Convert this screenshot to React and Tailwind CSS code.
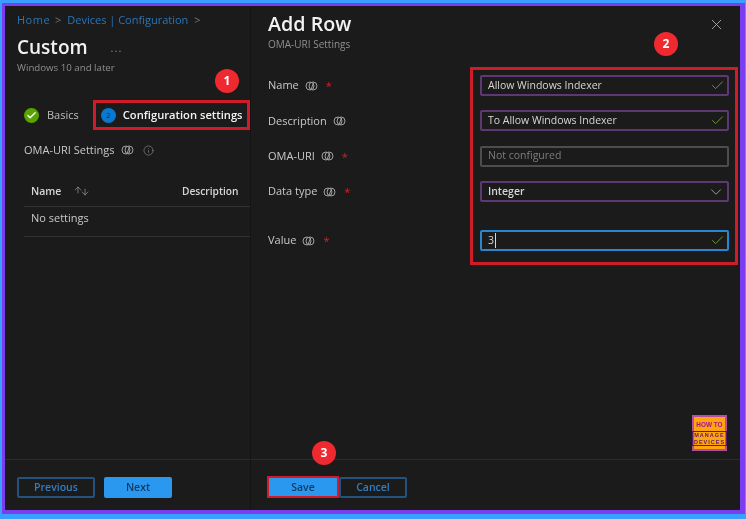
import { Check, ChevronDown, X, ArrowUp, ArrowDown, Info } from "lucide-react";

const HelpIcon = () => (
  <svg width="13" height="12" viewBox="0 0 13 12" fill="none" stroke="#a0a0a0" strokeWidth="1" className="shrink-0">
    <circle cx="5" cy="6" r="4" />
    <circle cx="8" cy="6" r="4" />
    <path d="M8.5 3 6 9.5" />
  </svg>
);

const Badge = ({ className, children }) => (
  <div className={`absolute flex h-[24px] w-[24px] items-center justify-center rounded-full bg-[#ee2a30] text-[12px] font-bold text-white ${className}`}>
    {children}
  </div>
);

const Label = ({ text, required }) => (
  <div className="flex items-center gap-[6px] text-[11px] text-[#c9c9c9]">
    <span>{text}</span>
    <HelpIcon />
    {required && <span className="ml-[2px] text-[11px] leading-none text-[#d8202a]">*</span>}
  </div>
);

const Field = ({ text, border = "border-[#5e3872]", color = "text-[#d6d6d6]", icon, cursor, bold }) => (
  <div className={`flex h-[21px] items-center justify-between rounded-[2px] border-2 pl-[6px] pr-[2px] text-[10.5px] ${border} ${color} ${bold ? "font-semibold" : ""}`}>
    <span className="flex items-center">
      {text}
      {cursor && <span className="ml-[1px] h-[15px] w-px bg-[#d6d6d6]" />}
    </span>
    {icon}
  </div>
);

const CheckMark = () => <Check size={15} strokeWidth={1.5} className="text-[#6f9a35]" />;

const App = () => {
  return (
    <main
      className="flex h-[519px] w-[746px] flex-col overflow-hidden bg-[#39a0ff] pb-[5px] pl-[2px] pr-[1px] pt-[3px] blur-[0.35px]"
      style={{ fontFamily: '"Open Sans", "Noto Sans", sans-serif' }}
    >
      <div className="relative flex min-h-0 flex-1 border-[3px] border-b-[4px] border-r-[5px] border-[#7a3df0] bg-[#1b1b1b]">
        {/* blade on the left */}
        <section className="flex w-[245px] shrink-0 flex-col">
          <div className="flex-1 pl-[12px]">
            <div className="mt-[5px] flex items-center gap-[6px] text-[11px] leading-[18px] text-[#2a75b8]">
              <span className="w-[32px] tracking-[0.5px]">Home</span>
              <span className="text-[#777]">&gt;</span>
              <span>Devices | Configuration</span>
              <span className="text-[#777]">&gt;</span>
            </div>
            <div className="mt-[4px] flex items-center">
              <h1 className="text-[19px] font-semibold leading-[28px] text-[#f2f2f2]">Custom</h1>
              <span className="ml-[23px] text-[11px] leading-none tracking-[1px] text-[#8a8a8a]">...</span>
            </div>
            <p className="text-[9.7px] leading-[14px] text-[#8f8f8f]">Windows 10 and later</p>

            <div className="mt-[25px] flex items-center">
              <div className="ml-[7px] flex items-center gap-[8px] text-[11px] text-[#bdbdbd]">
                <span className="flex h-[15px] w-[15px] items-center justify-center rounded-full bg-[#57a300]">
                  <Check size={11} strokeWidth={3} className="text-white" />
                </span>
                Basics
              </div>
              <div className="ml-[14px] flex h-[30px] w-[157px] shrink-0 items-center gap-[7px] border-[3px] border-[#d01c28] pl-[5px] text-[11.2px] font-semibold text-[#f2f2f2]">
                <span className="flex h-[15px] w-[15px] shrink-0 items-center justify-center rounded-full bg-[#0b78d0] text-[8px] font-normal text-[#0b2f55]">2</span>
                <span className="whitespace-nowrap">Configuration settings</span>
              </div>
            </div>

            <div className="ml-[7px] mt-[12px] flex items-center gap-[7px] text-[11px] text-[#c9c9c9]">
              <span>OMA-URI Settings</span>
              <HelpIcon />
              <Info size={11} strokeWidth={1.2} className="ml-[2px] text-[#a0a0a0]" />
            </div>

            <div className="ml-[7px] mt-[19px]">
              <div className="flex h-[29px] items-center border-b border-[#333] pl-[7px] text-[10.2px] font-semibold text-[#d6d6d6]">
                <span className="w-[42px] text-[10.5px]">Name</span>
                <span className="flex w-[109px] items-center text-[#c9c9c9]">
                  <ArrowUp size={10} strokeWidth={1.2} className="-mt-[4px]" />
                  <ArrowDown size={10} strokeWidth={1.2} className="-ml-[3px]" />
                </span>
                <span className="whitespace-nowrap">Description</span>
              </div>
              <div className="flex h-[30px] items-center border-b border-[#333] pb-[6px] pl-[7px] text-[11px] text-[#c9c9c9]">No settings</div>
            </div>
          </div>
          <footer className="flex h-[51px] items-start gap-[9px] border-t border-[#2c2c2c] pl-[12px] pt-[17px] text-[10.5px] font-semibold">
            <button className="h-[21px] w-[78px] rounded-[2px] border-2 border-[#24527d] pt-[1px] text-[#2f7fc4]">Previous</button>
            <button className="h-[21px] w-[68px] rounded-[2px] bg-[#2b98f0] pt-[1px] text-[#12395f]">Next</button>
          </footer>
        </section>

        {/* Add Row blade */}
        <section className="relative flex min-w-0 flex-1 flex-col border-l border-[#141414]">
          <div className="flex-1 pl-[17px] pr-[15px]">
            <div className="flex items-start justify-between">
              <div>
                <h2 className="mt-[3px] text-[19.7px] font-semibold leading-[30px] text-[#f2f2f2]">Add Row</h2>
                <p className="-mt-[2px] text-[10px] leading-[14px] text-[#8f8f8f]">OMA-URI Settings</p>
              </div>
              <X size={17} strokeWidth={1.2} className="mt-[10px] text-[#b5b5b5]" />
            </div>

            <div className="mt-[24px] -mr-[4px] grid grid-cols-[212px_1fr] gap-y-[14.4px]">
              <Label text="Name" required />
              <Field text="Allow Windows Indexer" icon={<CheckMark />} />
              <Label text="Description" />
              <Field text="To Allow Windows Indexer" icon={<CheckMark />} />
              <Label text="OMA-URI" required />
              <Field text="Not configured" border="border-[#4d4d4d]" color="text-[#7d7d7d]" />
              <Label text="Data type" required />
              <Field text="Integer" bold icon={<ChevronDown size={18} strokeWidth={1.1} className="text-[#b5b5b5]" />} />
            </div>
            <div className="mt-[28px] -mr-[4px] grid grid-cols-[212px_1fr]">
              <Label text="Value" required />
              <Field text="3" border="border-[#2b86d0]" cursor icon={<CheckMark />} />
            </div>
          </div>
          <footer className="flex h-[51px] items-start border-t border-[#2c2c2c] pl-[16px] pt-[16px] text-[10.5px] font-semibold">
            <button className="h-[22px] w-[72px] border-[2px] border-[#d01c28] bg-[#2b98f0] pt-[1px] text-[#12395f]">Save</button>
            <button className="mt-[1px] h-[21px] w-[68px] rounded-[2px] border-2 border-[#24527d] pt-[1px] text-[#2f7fc4]">Cancel</button>
          </footer>

          {/* callouts over the blade */}
          <div className="pointer-events-none absolute left-[219px] top-[61px] h-[198px] w-[268px] border-[3px] border-[#d01c28]" />
          <div
            className="absolute left-[441px] top-[409px] flex h-[36px] w-[35px] flex-col items-center justify-center border-2 border-[#b0509f] bg-[#ffa310] font-bold text-[#a0109a]"
            style={{ fontFamily: '"Liberation Sans", sans-serif' }}
          >
            <span className="scale-x-[.8] whitespace-nowrap text-[8px] leading-[9px]">HOW TO</span>
            <span className="mt-[2px] flex flex-col items-center border border-[#5a1a6a] px-[1px] text-[5.5px] leading-[6.5px] tracking-[1px] text-[#5a1a6a]">
              <span>MANAGE</span>
              <span>DEVICES</span>
            </span>
          </div>
        </section>

        <Badge className="left-[210px] top-[63px]">1</Badge>
        <Badge className="left-[649px] top-[26px]">2</Badge>
        <Badge className="left-[307px] top-[435px]">3</Badge>
      </div>
    </main>
  );
};

export default App;
